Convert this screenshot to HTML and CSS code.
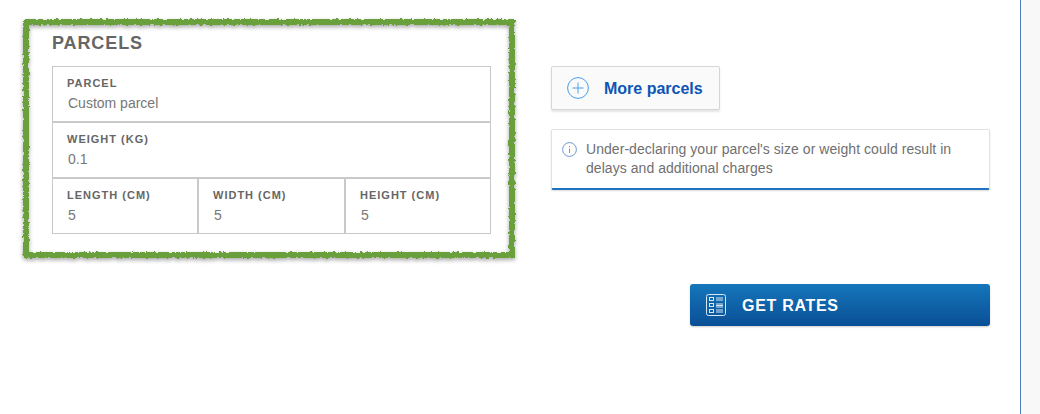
FILE: index.html
```html
<!DOCTYPE html>
<html lang="en">
<head>
    <meta charset="UTF-8">
    <meta name="viewport" content="width=device-width, initial-scale=1.0">
    <title>Parcels</title>
    <link rel="stylesheet" href="styles.css">
</head>
<body>
    <svg class="defs" width="0" height="0" aria-hidden="true">
        <filter id="rough" x="-2%" y="-3%" width="104%" height="106%">
            <feTurbulence type="fractalNoise" baseFrequency="0.3" numOctaves="3" seed="4" result="noise"/>
            <feDisplacementMap in="SourceGraphic" in2="noise" scale="4"/>
            <feGaussianBlur stdDeviation="0.5"/>
        </filter>
    </svg>

    <div class="page">
        <div class="main">
            <div class="left-col">
                <section class="parcels">
                    <h2>PARCELS</h2>
                    <div class="fields">
                        <div class="field">
                            <label>PARCEL</label>
                            <p>Custom parcel</p>
                        </div>
                        <div class="field">
                            <label>WEIGHT (KG)</label>
                            <p>0.1</p>
                        </div>
                        <div class="field-row">
                            <div class="field">
                                <label>LENGTH (CM)</label>
                                <p>5</p>
                            </div>
                            <div class="field">
                                <label>WIDTH (CM)</label>
                                <p>5</p>
                            </div>
                            <div class="field">
                                <label>HEIGHT (CM)</label>
                                <p>5</p>
                            </div>
                        </div>
                    </div>
                </section>
            </div>

            <div class="right-col">
                <button class="more-btn">
                    <svg width="22" height="22" viewBox="0 0 22 22" fill="none" stroke="#4a9fe8">
                        <circle cx="11" cy="11" r="10.4"/>
                        <path d="M11 5.5v11M5.5 11h11"/>
                    </svg>
                    <span>More parcels</span>
                </button>

                <div class="notice">
                    <svg width="15" height="15" viewBox="0 0 15 15" fill="none" stroke="#6f97cf">
                        <circle cx="7.5" cy="7.5" r="6.9"/>
                        <path d="M7.5 6.5v4.5"/>
                        <path d="M7.5 4v1.2"/>
                    </svg>
                    <p>Under-declaring your parcel's size or weight could result in delays and additional charges</p>
                </div>

                <button class="rates-btn">
                    <svg width="20" height="22" viewBox="0 0 20 22" fill="none" stroke="#d5e6f5">
                        <rect x="0.5" y="0.5" width="19" height="21" rx="2"/>
                        <rect x="3.5" y="3.5" width="4" height="3"/>
                        <rect x="3.5" y="9.5" width="4" height="3"/>
                        <rect x="3.5" y="15.5" width="4" height="3"/>
                        <path d="M10 4h7M10 6h7M10 10h7M10 11.5h7M10 13h7M10 16h7M10 18h7"/>
                    </svg>
                    <span>GET RATES</span>
                </button>
            </div>
        </div>
        <div class="side"></div>
    </div>
</body>
</html>
```

FILE: styles.css
```css
html, body {
    height: 100%;
}

body {
    margin: 0;
    font-family: "Liberation Sans", Arial, sans-serif;
    background-color: #fff;
    overflow: hidden;
}

.defs {
    display: block;
    height: 0;
}

.page {
    display: flex;
    height: 414px;
}

.main {
    display: flex;
    box-sizing: border-box;
    width: 1021px;
    border-right: 1px solid #4f7cc4;
}

.side {
    flex-grow: 1;
    background-color: #f8f8f8;
}

.left-col {
    padding: 20px 0 0 24px;
}

.parcels {
    position: relative;
    width: 490px;
    height: 238px;
    box-sizing: border-box;
    padding: 14px 23px 0 28px;
}

.parcels::before {
    content: "";
    position: absolute;
    top: -1px;
    right: -1px;
    bottom: 0;
    left: -1px;
    border: 6px solid #6aa03a;
    filter: url(#rough) drop-shadow(0 2px 2px rgba(0, 0, 0, 0.35));
    pointer-events: none;
}

.parcels h2 {
    margin: 0 0 13px 0;
    font-size: 18px;
    line-height: 19px;
    letter-spacing: 0.9px;
    color: #666;
}

.fields {
    border: 1px solid #c9c9c9;
}

.field {
    box-sizing: border-box;
    height: 56px;
    padding: 10px 14px 0 14px;
}

.fields > .field {
    border-bottom: 2px solid #c9c9c9;
}

.field-row {
    display: grid;
    grid-template-columns: 146px 147px 1fr;
}

.field-row .field {
    height: 54px;
    border-right: 2px solid #c9c9c9;
}

.field-row .field:last-child {
    border-right: none;
}

.field label {
    display: block;
    font-size: 11px;
    line-height: 13px;
    font-weight: bold;
    letter-spacing: 1px;
    color: #666;
}

.field p {
    margin: 4px 0 0 1px;
    font-size: 14px;
    line-height: 18px;
    color: #777;
}

.right-col {
    width: 439px;
    margin-left: 37px;
    padding-top: 66px;
}

.more-btn {
    display: flex;
    align-items: center;
    width: 169px;
    height: 44px;
    padding: 0 0 0 15px;
    background-color: #fafafa;
    border: 1px solid #d6d6d6;
    border-radius: 2px;
    box-shadow: 0 2px 2px rgba(0, 0, 0, 0.1);
    font-family: inherit;
}

.more-btn span {
    margin-left: 15px;
    padding-top: 2px;
    font-size: 16px;
    font-weight: bold;
    color: #0d55b5;
}

.notice {
    display: flex;
    box-sizing: border-box;
    height: 61px;
    margin-top: 19px;
    padding: 10px 12px 0 10px;
    border: 1px solid #e2e2e2;
    border-bottom: 2px solid #1f72c0;
    border-radius: 2px;
    box-shadow: 0 1px 2px rgba(0, 0, 0, 0.14);
}

.notice svg {
    flex-shrink: 0;
    margin-top: 2px;
}

.notice p {
    margin: 0 0 0 9px;
    font-size: 14px;
    line-height: 19px;
    letter-spacing: 0.05px;
    color: #707070;
}

.rates-btn {
    display: flex;
    align-items: center;
    width: 300px;
    height: 42px;
    margin: 94px 0 0 139px;
    padding: 0 0 0 16px;
    background: linear-gradient(#1576ba, #0a4f96);
    border: none;
    border-radius: 3px;
    box-shadow: 0 1px 2px rgba(0, 0, 0, 0.2);
    font-family: inherit;
}

.rates-btn span {
    margin-left: 16px;
    padding-top: 2px;
    font-size: 16px;
    font-weight: bold;
    letter-spacing: 0.7px;
    color: #fff;
}
```
